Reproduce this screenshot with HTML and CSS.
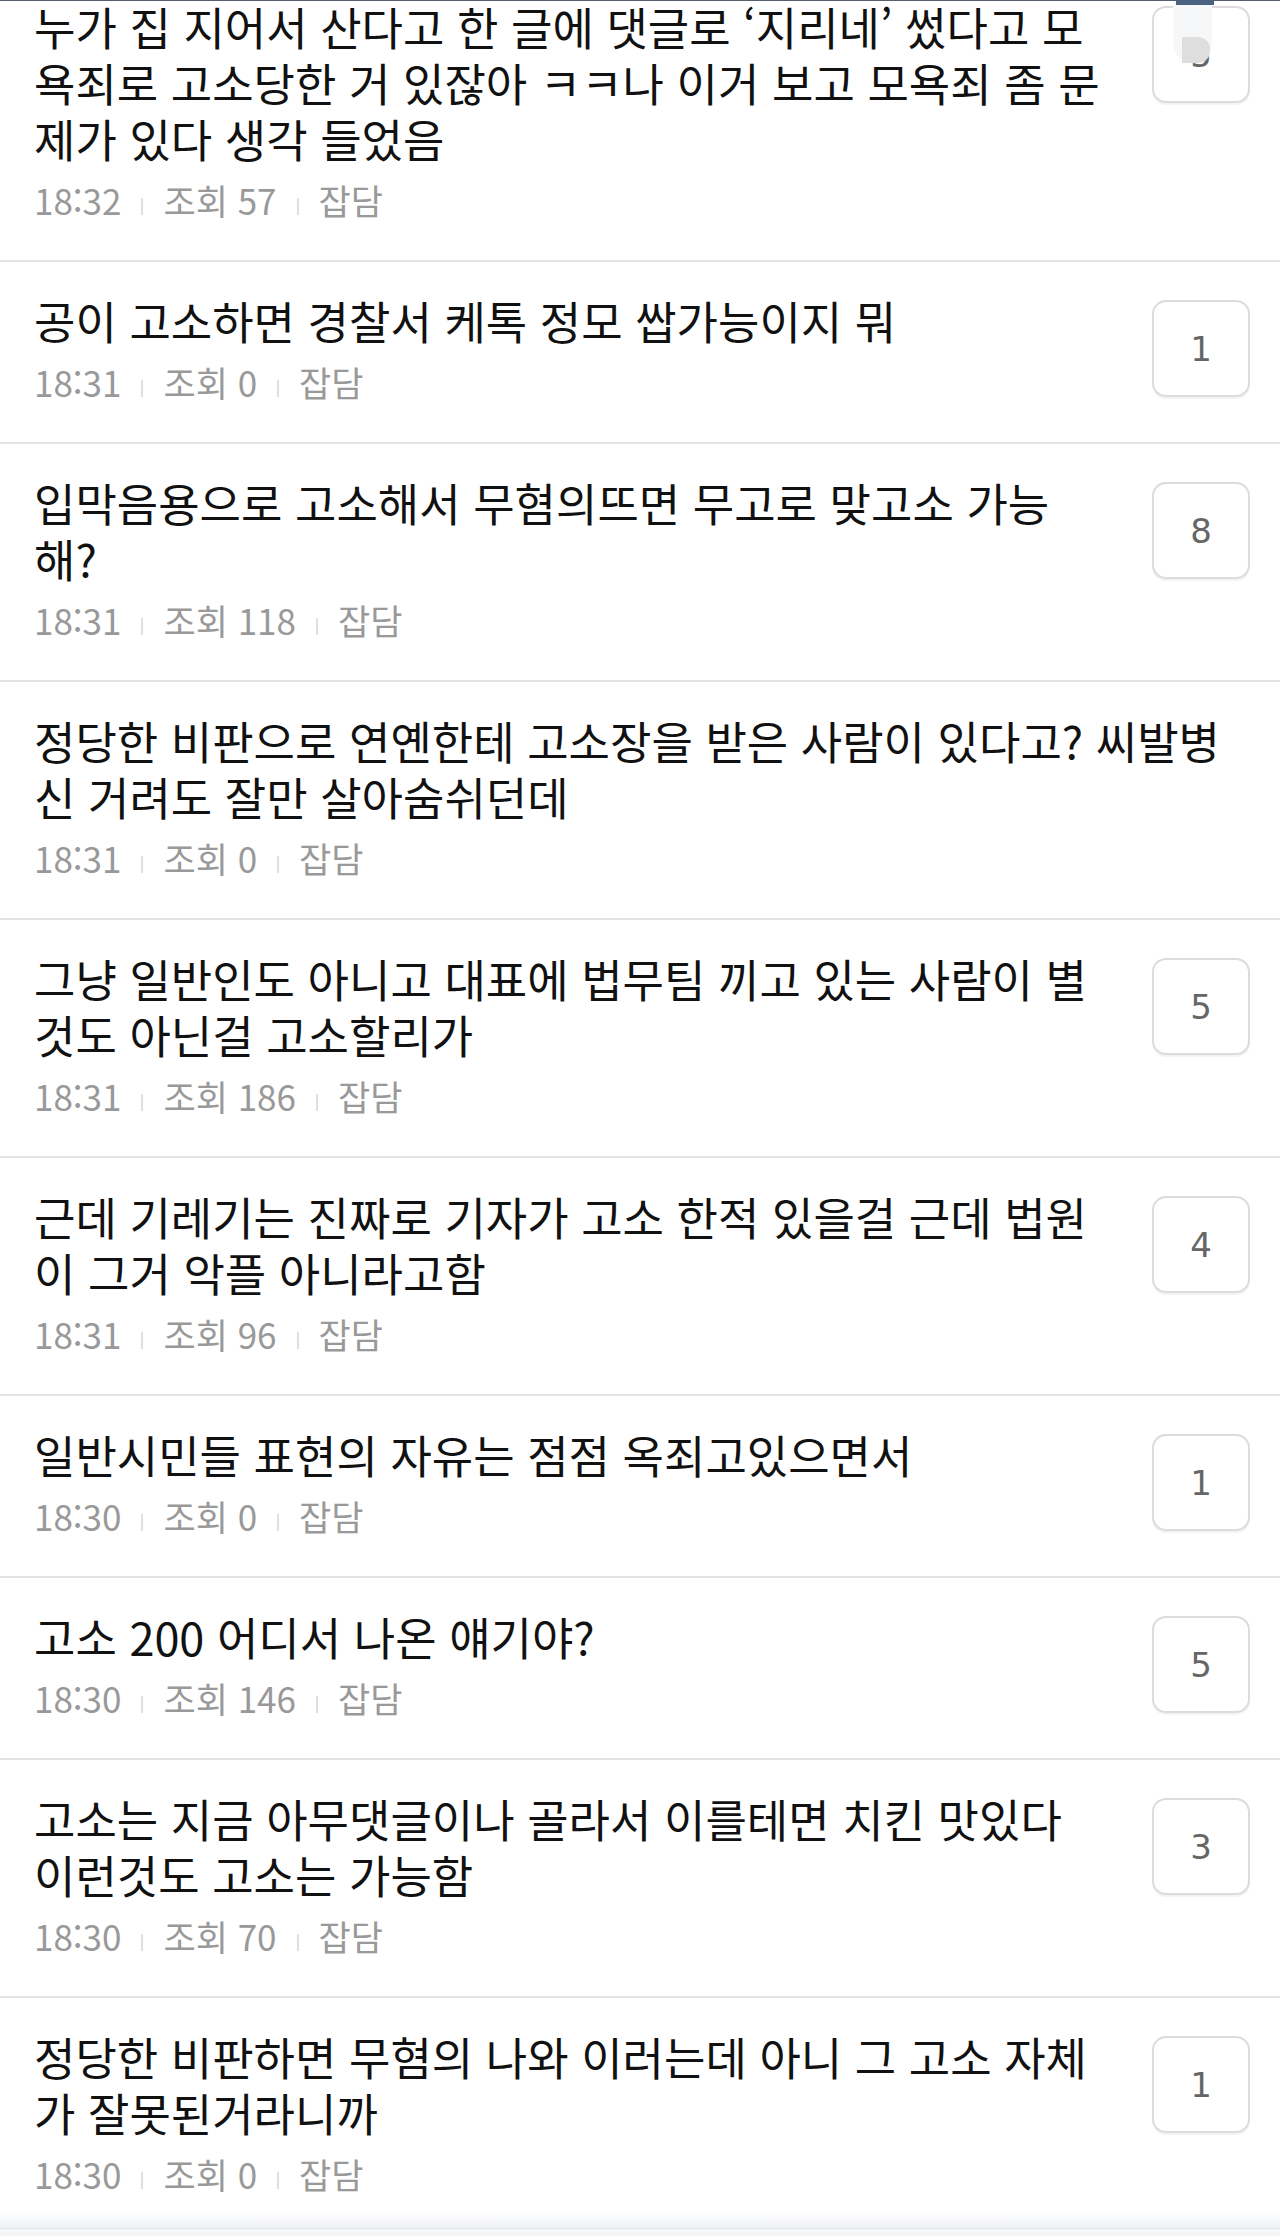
FILE: index.html
```html
<!DOCTYPE html>
<html lang="ko">
<head>
  <meta charset="UTF-8">
  <meta name="viewport" content="width=device-width, initial-scale=1">
  <title>고소 검색 결과</title>
  <link rel="stylesheet" href="styles.css">
</head>
<body>
  <div class="topline"><span class="tab"></span></div>

  <ul class="list">
    <li class="item">
      <div class="body">
        <p class="title">누가 집 지어서 산다고 한 글에 댓글로 ‘지리네’ 썼다고 모욕죄로 고소당한 거 있잖아 ㅋㅋ나 이거 보고 모욕죄 좀 문제가 있다 생각 들었음</p>
        <p class="meta">18:32<i class="bar"></i>조회 57<i class="bar"></i>잡담</p>
      </div>
      <span class="count">5</span>
    </li>
    <li class="item">
      <div class="body">
        <p class="title">공이 고소하면 경찰서 케톡 정모 쌉가능이지 뭐</p>
        <p class="meta">18:31<i class="bar"></i>조회 0<i class="bar"></i>잡담</p>
      </div>
      <span class="count">1</span>
    </li>
    <li class="item">
      <div class="body">
        <p class="title">입막음용으로 고소해서 무혐의뜨면 무고로 맞고소 가능해?</p>
        <p class="meta">18:31<i class="bar"></i>조회 118<i class="bar"></i>잡담</p>
      </div>
      <span class="count">8</span>
    </li>
    <li class="item">
      <div class="body">
        <p class="title">정당한 비판으로 연옌한테 고소장을 받은 사람이 있다고? 씨발병신 거려도 잘만 살아숨쉬던데</p>
        <p class="meta">18:31<i class="bar"></i>조회 0<i class="bar"></i>잡담</p>
      </div>
    </li>
    <li class="item">
      <div class="body">
        <p class="title">그냥 일반인도 아니고 대표에 법무팀 끼고 있는 사람이 별것도 아닌걸 고소할리가</p>
        <p class="meta">18:31<i class="bar"></i>조회 186<i class="bar"></i>잡담</p>
      </div>
      <span class="count">5</span>
    </li>
    <li class="item">
      <div class="body">
        <p class="title">근데 기레기는 진짜로 기자가 고소 한적 있을걸 근데 법원이 그거 악플 아니라고함</p>
        <p class="meta">18:31<i class="bar"></i>조회 96<i class="bar"></i>잡담</p>
      </div>
      <span class="count">4</span>
    </li>
    <li class="item">
      <div class="body">
        <p class="title">일반시민들 표현의 자유는 점점 옥죄고있으면서</p>
        <p class="meta">18:30<i class="bar"></i>조회 0<i class="bar"></i>잡담</p>
      </div>
      <span class="count">1</span>
    </li>
    <li class="item">
      <div class="body">
        <p class="title">고소 200 어디서 나온 얘기야?</p>
        <p class="meta">18:30<i class="bar"></i>조회 146<i class="bar"></i>잡담</p>
      </div>
      <span class="count">5</span>
    </li>
    <li class="item">
      <div class="body">
        <p class="title">고소는 지금 아무댓글이나 골라서 이를테면 치킨 맛있다 이런것도 고소는 가능함</p>
        <p class="meta">18:30<i class="bar"></i>조회 70<i class="bar"></i>잡담</p>
      </div>
      <span class="count">3</span>
    </li>
    <li class="item">
      <div class="body">
        <p class="title">정당한 비판하면 무혐의 나와 이러는데 아니 그 고소 자체가 잘못된거라니까</p>
        <p class="meta">18:30<i class="bar"></i>조회 0<i class="bar"></i>잡담</p>
      </div>
      <span class="count">1</span>
    </li>
  </ul>
  <div class="foot"></div>

  <div class="float"><span class="float-sq"></span></div>
</body>
</html>
```

FILE: styles.css
```css
html {
  background: #f4f5f7;
}
body {
  margin: 0;
  padding: 0;
  font-family: "Noto Sans CJK KR", "Noto Sans", sans-serif;
  position: relative;
  overflow: hidden;
}
.topline {
  position: absolute;
  top: 0;
  left: 0;
  right: 0;
  height: 1px;
  background: #56606b;
  z-index: 3;
}
.tab {
  position: absolute;
  top: 0;
  left: 1176px;
  width: 38px;
  height: 5px;
  background: #49627f;
}
.list {
  list-style: none;
  margin: -32px 0 0;
  padding: 0;
  background: #fff;
}
.item {
  display: flex;
  align-items: flex-start;
  padding: 31px 30px 38px 34px;
  border-bottom: 2px solid #e3e3e3;
}
.item:last-child {
  border-bottom: none;
  padding-bottom: 17px;
}
.body {
  flex: 1;
  min-width: 0;
}
.title {
  margin: 0;
  font-size: 45px;
  line-height: 56px;
  color: #111;
}
.meta {
  margin: 11px 0 0;
  font-size: 35px;
  line-height: 44px;
  color: #999;
}
.bar {
  display: inline-block;
  width: 2px;
  height: 17px;
  margin: 0 20px;
  background: #e0e0e0;
}
.count {
  flex: none;
  box-sizing: border-box;
  width: 98px;
  height: 97px;
  margin: 7px 0 0 52px;
  display: flex;
  align-items: center;
  justify-content: center;
  border: 2px solid #dcdcdc;
  border-radius: 14px;
  box-shadow: 0 2px 1px rgba(0,0,0,0.05);
  font-family: "DejaVu Sans", sans-serif;
  font-size: 34px;
  color: #666;
}
.foot {
  height: 15px;
  background: linear-gradient(#fff, #eef0f3);
  border-bottom: 1px solid #e2e5e9;
}
.float {
  position: absolute;
  top: 0;
  left: 1173px;
  width: 39px;
  height: 62px;
  background: #f6f7f8;
  border-radius: 0 0 20px 18px;
  z-index: 2;
}
.float-sq {
  position: absolute;
  left: 9px;
  top: 37px;
  width: 28px;
  height: 26px;
  background: #dedede;
  border-radius: 0 12px 12px 0;
}
```
